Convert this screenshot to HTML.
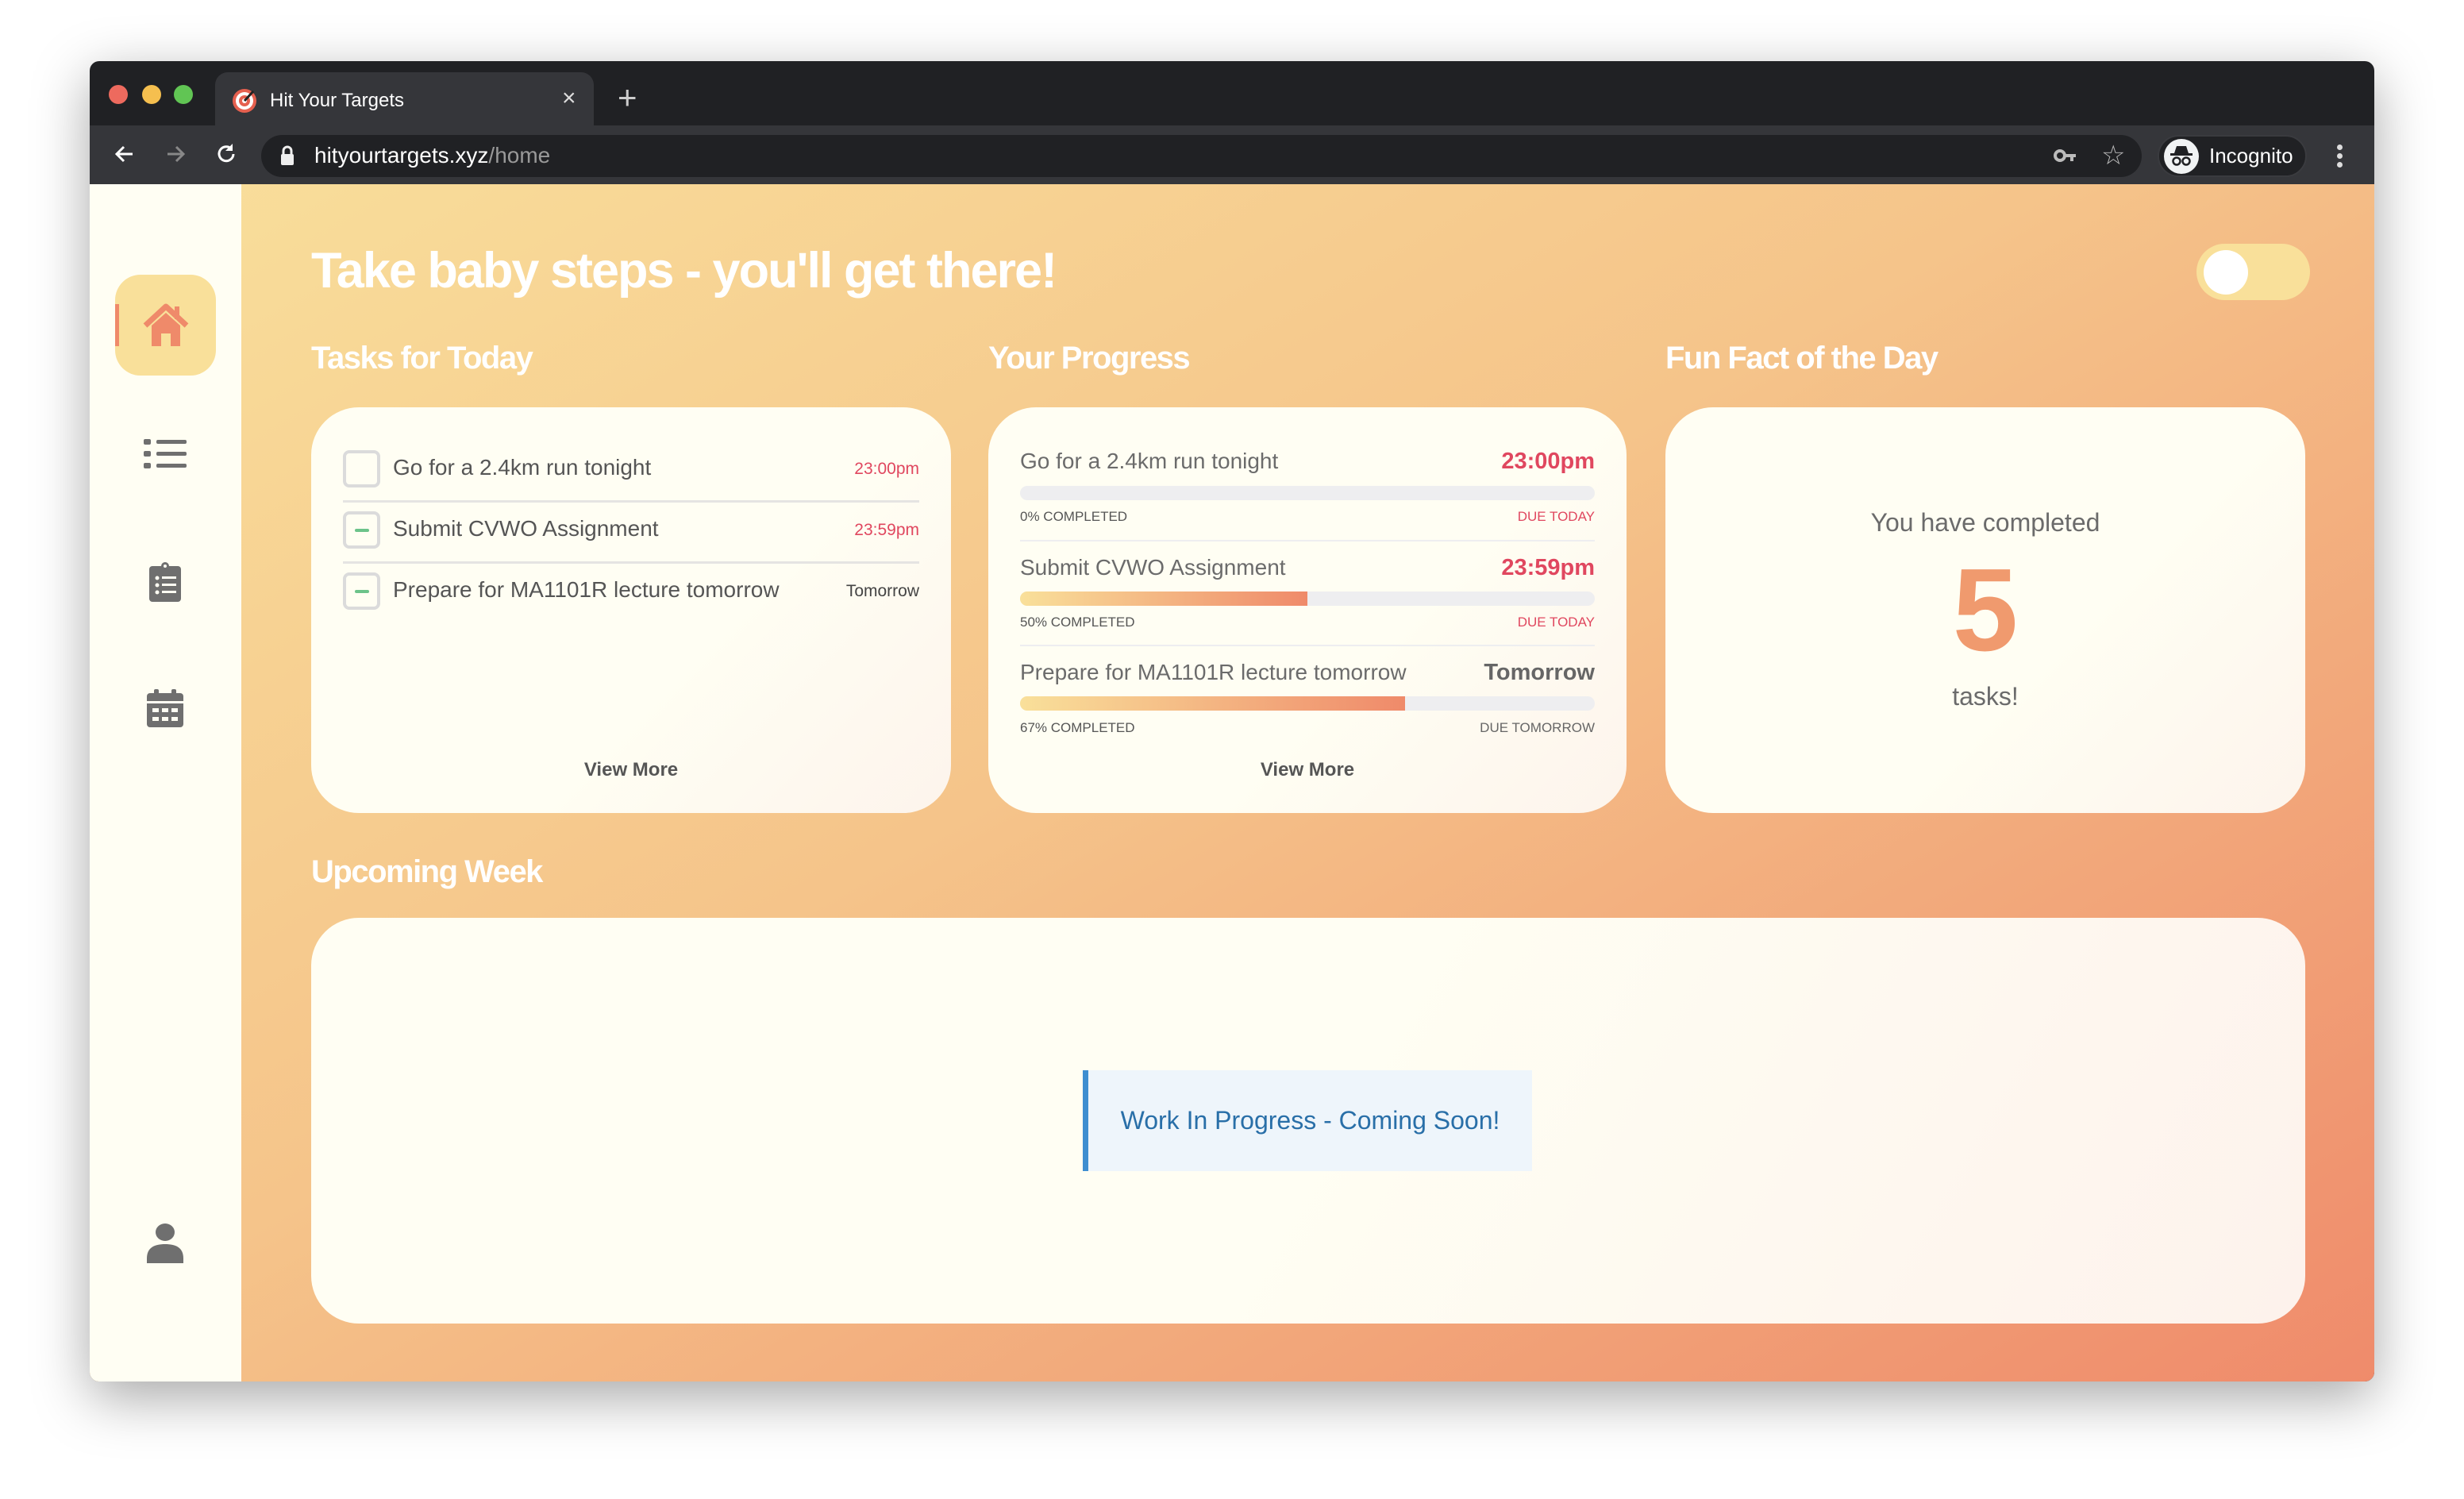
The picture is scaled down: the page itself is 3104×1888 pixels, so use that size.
<!DOCTYPE html>
<html><head><meta charset="utf-8"><style>
*{margin:0;padding:0;box-sizing:border-box}
body{width:3104px;height:1888px;background:#fff;position:relative;overflow:hidden;font-family:"Liberation Sans",sans-serif}
.a{position:absolute}
#win{left:113px;top:77px;width:2878px;height:1663px;border-radius:12px;overflow:hidden;box-shadow:0 20px 70px rgba(0,0,0,.35);background:#202124}
.t{white-space:nowrap}
.card{position:absolute;border-radius:60px;background:linear-gradient(135deg,#fffef3 60%,#fdf4ec)}
.gray{color:#555}
.red{color:#e0475f}
.bar{position:absolute;left:40px;right:40px;height:18px;border-radius:9px;background:#eeeef0;overflow:hidden}
.fill{height:100%;background:linear-gradient(90deg,#f9e09a,#ef8a6a)}
.cb{position:absolute;left:40px;width:47px;height:47px;border:4px solid #dbdbdb;border-radius:8px}
.cb i{position:absolute;left:11px;top:18px;width:18px;height:4px;background:#6cc38a;border-radius:2px}
.sep{position:absolute;left:40px;right:40px;height:3px;background:#e5e4e2}
.h2{position:absolute;color:#fff;font-size:40px;font-weight:bold;letter-spacing:-1.5px}
</style></head><body>
<div id="win" class="a">
 <div class="a" style="left:24px;top:30px;width:24px;height:24px;border-radius:50%;background:#ed6a5e"></div>
 <div class="a" style="left:66px;top:30px;width:24px;height:24px;border-radius:50%;background:#f5bf4f"></div>
 <div class="a" style="left:106px;top:30px;width:24px;height:24px;border-radius:50%;background:#61c554"></div>
 <div class="a" style="left:158px;top:14px;width:477px;height:70px;background:#35363a;border-radius:16px 16px 0 0"></div>
 <svg class="a" style="left:178px;top:33px" width="34" height="34" viewBox="0 0 34 34"><circle cx="17" cy="17" r="15" fill="#e5604f"/><circle cx="17" cy="17" r="11" fill="#fff"/><circle cx="17" cy="17" r="7" fill="#e5604f"/><circle cx="17" cy="17" r="3" fill="#fff"/><path d="M17 17 L28 5" stroke="#222" stroke-width="3"/></svg>
 <div class="a t" style="left:227px;top:36px;color:#fff;font-size:24px">Hit Your Targets</div>
 <div class="a t" style="left:595px;top:30px;color:#ddd;font-size:30px">×</div>
 <div class="a t" style="left:665px;top:22px;color:#ccc;font-size:42px;font-weight:300">+</div>
 <div class="a" style="left:0;top:81px;width:2878px;height:74px;background:#35363a"></div>
 <svg class="a" style="left:28px;top:101px" width="32" height="32" viewBox="0 0 32 32"><path d="M26 16H7M15 7l-9 9 9 9" stroke="#fff" stroke-width="3" fill="none"/></svg>
 <svg class="a" style="left:92px;top:101px" width="32" height="32" viewBox="0 0 32 32"><path d="M6 16h19M17 7l9 9-9 9" stroke="#888" stroke-width="3" fill="none"/></svg>
 <svg class="a" style="left:156px;top:101px" width="32" height="32" viewBox="0 0 32 32"><path d="M25 16a9 9 0 1 1-3-7" stroke="#fff" stroke-width="3" fill="none"/><path d="M24 3v9h-9z" fill="#fff"/></svg>
 <div class="a" style="left:216px;top:93px;width:2369px;height:53px;border-radius:27px;background:#202124"></div>
 <svg class="a" style="left:240px;top:106px" width="18" height="26" viewBox="0 0 18 26"><rect x="1" y="11" width="16" height="14" rx="2" fill="#eee"/><path d="M4 12V7a5 5 0 0 1 10 0v5" stroke="#eee" stroke-width="3" fill="none"/></svg>
 <div class="a t" style="left:283px;top:103px;font-size:28px;color:#fff">hityourtargets.xyz<span style="color:#999">/home</span></div>
 <svg class="a" style="left:2474px;top:108px" width="30" height="22" viewBox="0 0 30 22"><circle cx="8" cy="11" r="6" stroke="#bbb" stroke-width="4" fill="none"/><path d="M14 9h14v4h-3v5h-4v-5h-7z" fill="#bbb"/></svg>
 <div class="a t" style="left:2534px;top:99px;font-size:34px;color:#bbb">☆</div>
 <div class="a" style="left:2605px;top:93px;width:188px;height:53px;border-radius:27px;background:#202124;border:2px solid #3a3b3f"></div>
 <svg class="a" style="left:2612px;top:97px" width="46" height="46" viewBox="0 0 46 46"><circle cx="23" cy="23" r="22" fill="#f1f3f4"/><path d="M14 19l3-9h12l3 9z" fill="#202124"/><rect x="9" y="19" width="28" height="3" fill="#202124"/><circle cx="17" cy="29" r="4.5" stroke="#202124" stroke-width="2.5" fill="none"/><circle cx="29" cy="29" r="4.5" stroke="#202124" stroke-width="2.5" fill="none"/></svg>
 <div class="a t" style="left:2670px;top:104px;font-size:26px;color:#fff">Incognito</div>
 <div class="a" style="left:2831px;top:105px;width:7px;height:7px;border-radius:50%;background:#ddd;box-shadow:0 11px 0 #ddd,0 22px 0 #ddd"></div>
 <div class="a" style="left:0;top:155px;width:2878px;height:1508px;background:linear-gradient(150deg,#f9df9b 0%,#f5c48a 45%,#ef8b6b 100%)"></div>
 <div class="a" style="left:0;top:155px;width:191px;height:1508px;background:#fffef3"></div>
 <div class="a" style="left:32px;top:269px;width:127px;height:127px;border-radius:32px;background:#f9e09a"></div>
 <div class="a" style="left:32px;top:306px;width:5px;height:53px;background:#ef8a6a"></div>
 <svg class="a" style="left:66px;top:305px" width="60" height="56" viewBox="0 0 60 56"><path d="M4 28L30 4l26 24" stroke="#ef8a6a" stroke-width="7" fill="none" stroke-linejoin="round"/><path d="M12 28L30 12l18 16v26H36V38H24v16H12z" fill="#ef8a6a"/><rect x="41" y="4" width="6" height="16" fill="#ef8a6a"/></svg>
 <svg class="a" style="left:68px;top:474px" width="54" height="42" viewBox="0 0 54 42"><rect x="0" y="2" width="9" height="7" rx="2" fill="#6f6f6f"/><rect x="0" y="17" width="9" height="7" rx="2" fill="#6f6f6f"/><rect x="0" y="32" width="9" height="7" rx="2" fill="#6f6f6f"/><rect x="16" y="3" width="38" height="5" rx="2" fill="#6f6f6f"/><rect x="16" y="18" width="38" height="5" rx="2" fill="#6f6f6f"/><rect x="16" y="33" width="38" height="5" rx="2" fill="#6f6f6f"/></svg>
 <svg class="a" style="left:75px;top:631px" width="40" height="50" viewBox="0 0 40 50"><rect x="0" y="5" width="40" height="45" rx="4" fill="#6f6f6f"/><circle cx="20" cy="5" r="5" fill="#6f6f6f"/><circle cx="20" cy="5" r="2" fill="#fffef3"/><circle cx="10" cy="20" r="2.5" fill="#fffef3"/><circle cx="10" cy="29" r="2.5" fill="#fffef3"/><circle cx="10" cy="38" r="2.5" fill="#fffef3"/><rect x="16" y="18" width="18" height="3" fill="#fffef3"/><rect x="16" y="27" width="18" height="3" fill="#fffef3"/><rect x="16" y="36" width="18" height="3" fill="#fffef3"/></svg>
 <svg class="a" style="left:72px;top:791px" width="46" height="48" viewBox="0 0 46 48"><rect x="0" y="5" width="46" height="43" rx="4" fill="#6f6f6f"/><rect x="9" y="0" width="6" height="8" rx="2" fill="#6f6f6f"/><rect x="31" y="0" width="6" height="8" rx="2" fill="#6f6f6f"/><rect x="0" y="15" width="46" height="3" fill="#fffef3"/><g fill="#fffef3"><rect x="7" y="24" width="8" height="5"/><rect x="19" y="24" width="8" height="5"/><rect x="31" y="24" width="8" height="5"/><rect x="7" y="35" width="8" height="5"/><rect x="19" y="35" width="8" height="5"/><rect x="31" y="35" width="8" height="5"/></g></svg>
 <svg class="a" style="left:72px;top:1462px" width="46" height="52" viewBox="0 0 46 52"><ellipse cx="23" cy="13" rx="12" ry="11" fill="#6f6f6f"/><path d="M0 46c0-14 10-18 23-18s23 4 23 18v6H0z" fill="#6f6f6f"/></svg>

 <div class="a t" style="left:279px;top:228px;color:#fff;font-size:63px;font-weight:bold;letter-spacing:-2px">Take baby steps - you'll get there!</div>
 <div class="a" style="left:2654px;top:230px;width:143px;height:71px;border-radius:36px;background:#f9e09a"></div>
 <div class="a" style="left:2663px;top:238px;width:56px;height:56px;border-radius:50%;background:#fff"></div>

 <div class="h2 t" style="left:279px;top:352px">Tasks for Today</div>
 <div class="h2 t" style="left:1132px;top:352px">Your Progress</div>
 <div class="h2 t" style="left:1985px;top:352px">Fun Fact of the Day</div>
 <div class="h2 t" style="left:279px;top:999px">Upcoming Week</div>

 <div class="card" style="left:279px;top:436px;width:806px;height:511px">
  <div class="cb" style="top:54px"></div>
  <div class="a t gray" style="left:103px;top:60px;font-size:28px">Go for a 2.4km run tonight</div>
  <div class="a t red" style="right:40px;top:66px;font-size:21px">23:00pm</div>
  <div class="sep" style="top:117px"></div>
  <div class="cb" style="top:131px"><i></i></div>
  <div class="a t gray" style="left:103px;top:137px;font-size:28px">Submit CVWO Assignment</div>
  <div class="a t red" style="right:40px;top:143px;font-size:21px">23:59pm</div>
  <div class="sep" style="top:194px"></div>
  <div class="cb" style="top:208px"><i></i></div>
  <div class="a t gray" style="left:103px;top:214px;font-size:28px">Prepare for MA1101R lecture tomorrow</div>
  <div class="a t" style="right:40px;top:220px;font-size:21px;color:#444">Tomorrow</div>
  <div class="a t" style="left:0;right:0;text-align:center;top:443px;font-size:24px;color:#555;font-weight:bold">View More</div>
 </div>
 <div class="card" style="left:1132px;top:436px;width:804px;height:511px">
  <div class="a t" style="left:40px;top:52px;font-size:28px;color:#6b6b6b">Go for a 2.4km run tonight</div>
  <div class="a t red" style="right:40px;top:52px;font-size:29px;font-weight:bold">23:00pm</div>
  <div class="bar" style="top:99px"></div>
  <div class="a t" style="left:40px;top:128px;font-size:17px;color:#555">0% COMPLETED</div>
  <div class="a t red" style="right:40px;top:128px;font-size:17px">DUE TODAY</div>
  <div class="sep" style="top:167px;height:2px;background:#eeeef0"></div>
  <div class="a t" style="left:40px;top:186px;font-size:28px;color:#6b6b6b">Submit CVWO Assignment</div>
  <div class="a t red" style="right:40px;top:186px;font-size:29px;font-weight:bold">23:59pm</div>
  <div class="bar" style="top:232px"><div class="fill" style="width:50%"></div></div>
  <div class="a t" style="left:40px;top:261px;font-size:17px;color:#555">50% COMPLETED</div>
  <div class="a t red" style="right:40px;top:261px;font-size:17px">DUE TODAY</div>
  <div class="sep" style="top:299px;height:2px;background:#eeeef0"></div>
  <div class="a t" style="left:40px;top:318px;font-size:28px;color:#6b6b6b">Prepare for MA1101R lecture tomorrow</div>
  <div class="a t" style="right:40px;top:318px;font-size:29px;font-weight:bold;color:#666">Tomorrow</div>
  <div class="bar" style="top:364px"><div class="fill" style="width:67%"></div></div>
  <div class="a t" style="left:40px;top:394px;font-size:17px;color:#555">67% COMPLETED</div>
  <div class="a t" style="right:40px;top:394px;font-size:17px;color:#666">DUE TOMORROW</div>
  <div class="a t" style="left:0;right:0;text-align:center;top:443px;font-size:24px;color:#555;font-weight:bold">View More</div>
 </div>
 <div class="card" style="left:1985px;top:436px;width:806px;height:511px">
  <div class="a t" style="left:0;right:0;text-align:center;top:127px;font-size:32px;color:#6b6b6b">You have completed</div>
  <div class="a t" style="left:0;right:0;text-align:center;top:182px;font-size:148px;font-weight:bold;color:#f09a6e;line-height:1">5</div>
  <div class="a t" style="left:0;right:0;text-align:center;top:346px;font-size:32px;color:#6b6b6b">tasks!</div>
 </div>
 <div class="card" style="left:279px;top:1079px;width:2512px;height:511px;background:linear-gradient(120deg,#fffef3 50%,#fdf2ec)">
  <div class="a" style="left:972px;top:192px;width:566px;height:127px;background:#eef5fb;border-left:7px solid #3e8ed0"></div>
  <div class="a t" style="left:972px;width:573px;text-align:center;top:237px;font-size:32px;color:#296fa8">Work In Progress - Coming Soon!</div>
 </div>
</div>
</body></html>
